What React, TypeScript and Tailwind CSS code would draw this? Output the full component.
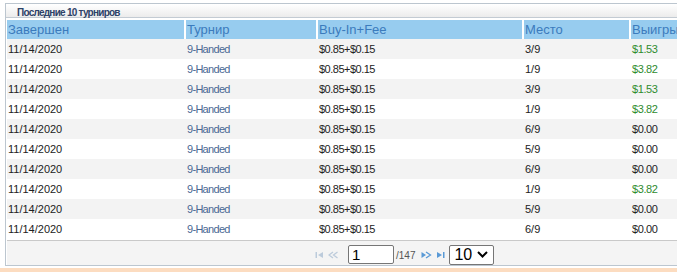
import React from "react";

const rows = [
  ["11/14/2020", "9-Handed", "$0.85+$0.15", "3/9", "$1.53"],
  ["11/14/2020", "9-Handed", "$0.85+$0.15", "1/9", "$3.82"],
  ["11/14/2020", "9-Handed", "$0.85+$0.15", "3/9", "$1.53"],
  ["11/14/2020", "9-Handed", "$0.85+$0.15", "1/9", "$3.82"],
  ["11/14/2020", "9-Handed", "$0.85+$0.15", "6/9", "$0.00"],
  ["11/14/2020", "9-Handed", "$0.85+$0.15", "5/9", "$0.00"],
  ["11/14/2020", "9-Handed", "$0.85+$0.15", "6/9", "$0.00"],
  ["11/14/2020", "9-Handed", "$0.85+$0.15", "1/9", "$3.82"],
  ["11/14/2020", "9-Handed", "$0.85+$0.15", "5/9", "$0.00"],
  ["11/14/2020", "9-Handed", "$0.85+$0.15", "6/9", "$0.00"],
];

const widths = ["w-[177px]", "w-[132px]", "w-[206px]", "w-[107px]", "w-[110px]"];
const tracks = ["tracking-normal", "tracking-[-0.7px]", "tracking-[-0.5px]", "tracking-normal", "tracking-[-0.4px]"];

export default function App() {
  return (
    <div className="w-[677px] h-[272px] bg-white overflow-hidden relative font-['Liberation_Sans',Arial,sans-serif]">
      <div className="pt-[3px] pl-[5px]">
        <div className="w-[760px] border border-[#bcc6cf] bg-white">
          <div className="h-[14px] bg-gradient-to-b from-white to-[#ececec] border-b border-[#c3cbd3] pl-[11px] flex items-center pt-[4px]">
            <span className="text-[10px] font-bold tracking-[-0.75px] text-[#2d4268] leading-none">Последние 10 турниров</span>
          </div>
          <div className="pl-[1px] pt-[2px]">
            <div className="flex h-[19px] bg-[#97ccef] text-[13px] text-[#3b7bbd] leading-none items-center">
              {["Завершен", "Турнир", "Buy-In+Fee", "Место", "Выигрыш"].map((h, i) => (
                <div
                  key={i}
                  className={`${widths[i]} h-full flex items-center pl-[1px] ${i > 0 ? "border-l-2 border-white" : ""}`}
                >
                  {h}
                </div>
              ))}
            </div>
            {rows.map((r, ri) => (
              <div
                key={ri}
                className={`flex h-[20px] items-center text-[11px] leading-none ${ri % 2 === 0 ? "bg-[#f3f3f3]" : "bg-white"}`}
              >
                {r.map((c, ci) => (
                  <div
                    key={ci}
                    className={`${widths[ci]} ${tracks[ci]} pl-[1px] pt-[1px] ${ci > 0 ? "border-l-2 border-transparent" : ""} ${
                      ci === 1
                        ? "text-[#4a6893]"
                        : ci === 4 && c !== "$0.00"
                        ? "text-[#2e8b2e]"
                        : "text-[#222222]"
                    }`}
                  >
                    {c}
                  </div>
                ))}
              </div>
            ))}
          </div>
          <div className="mx-[1px] mt-[1px] border-t border-[#c9c9c9] bg-[#f4f4f4] h-[25px] flex items-center pt-[3px] pl-[308px]">
            <svg width="9" height="8" viewBox="0 0 9 8" className="mr-[4px]">
              <rect x="0.5" y="1" width="1.5" height="6" fill="#bccbdb" />
              <path d="M8 1 L3 4 L8 7 Z" fill="#bccbdb" />
            </svg>
            <svg width="10" height="8" viewBox="0 0 10 8" className="mr-[10px]">
              <path d="M5 1 L1 4 L5 7" stroke="#bccbdb" strokeWidth="1.3" fill="none" />
              <path d="M9.5 1 L5.5 4 L9.5 7" stroke="#bccbdb" strokeWidth="1.3" fill="none" />
            </svg>
            <div className="w-[46px] h-[19px] border border-[#767676] rounded-[2px] bg-white flex items-center pl-[3px] text-[15px] leading-none text-black">
              1
            </div>
            <span className="ml-[2px] text-[10px] text-[#555] leading-none mt-[2px]">/147</span>
            <svg width="11" height="8" viewBox="0 0 11 8" className="ml-[6px] mr-[4px]">
              <path d="M0.5 1 L5 4 L0.5 7 Z" fill="#5a9ad6" />
              <path d="M5 1 L9.5 4 L5 7" stroke="#5a9ad6" strokeWidth="1.3" fill="none" />
            </svg>
            <svg width="9" height="8" viewBox="0 0 9 8" className="mr-[4px]">
              <path d="M1 1 L6 4 L1 7 Z" fill="#5a9ad6" />
              <rect x="7" y="1" width="1.5" height="6" fill="#5a9ad6" />
            </svg>
            <div className="w-[45px] h-[20px] border border-[#767676] rounded-[2px] bg-white flex items-center justify-between pl-[4px] pr-[5px] text-[16px] leading-none text-black">
              <span>10</span>
              <svg width="11" height="7" viewBox="0 0 11 7">
                <path d="M1 1 L5.5 5.5 L10 1" stroke="#000" strokeWidth="2" fill="none" />
              </svg>
            </div>
          </div>
        </div>
      </div>
      <div className="absolute left-0 right-0 top-[268px] h-[4px] bg-[#fcdcc0]" />
    </div>
  );
}
